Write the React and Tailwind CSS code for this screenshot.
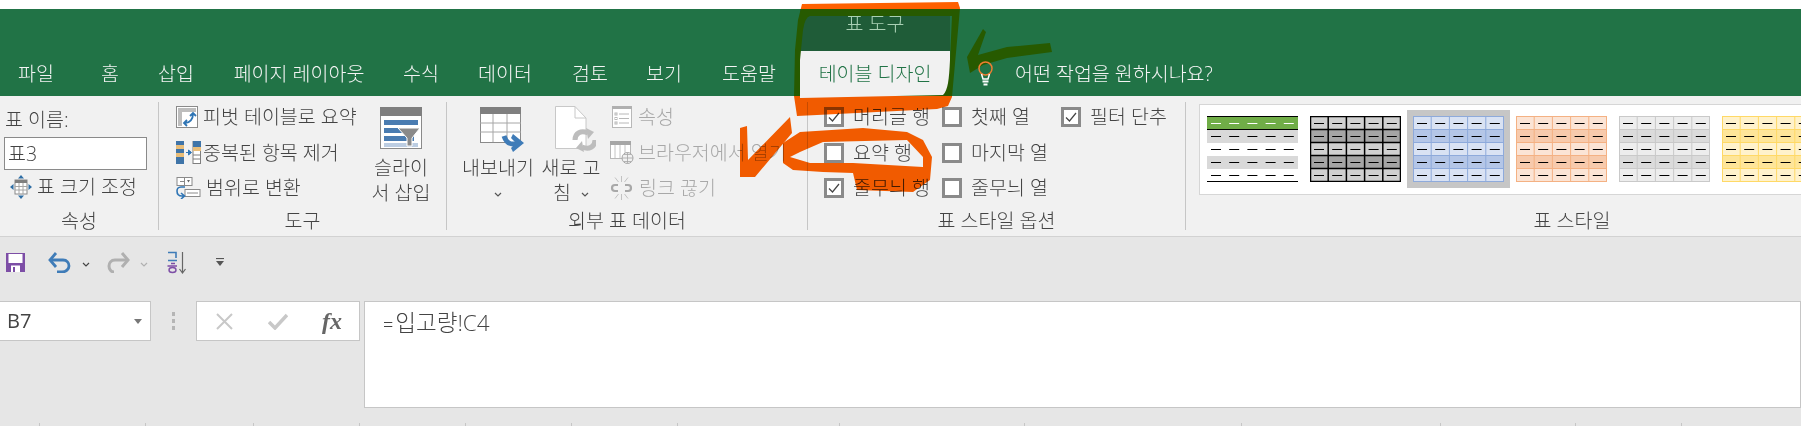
import React from "react";

const tabs = [
  ["파일", "w-[72px]"],
  ["홈", "w-[76px]"],
  ["삽입", "w-[56px]"],
  ["페이지 레이아웃", "w-[190px]"],
  ["수식", "w-[54px]"],
  ["데이터", "w-[114px]"],
  ["검토", "w-[56px]"],
  ["보기", "w-[92px]"],
  ["도움말", "w-[78px]"],
];

function Tab({ label, w }) {
  return <div className={`${w} text-center text-[#f4f4f4] whitespace-nowrap`}>{label}</div>;
}

function Check({ on }) {
  return (
    <span className="w-[20px] h-[20px] border-[3px] border-[#8a8a8a] bg-white shrink-0 flex items-center justify-center">
      {on && (
        <svg width="14" height="14" viewBox="0 0 14 14" fill="none">
          <path d="M2 7.5 L5.5 11 L12 3" stroke="#444" strokeWidth="1.2" />
        </svg>
      )}
    </span>
  );
}

function CheckRow({ on, label }) {
  return (
    <div className="h-[30px] flex items-center gap-[9px]">
      <Check on={on} />
      <span className="whitespace-nowrap">{label}</span>
    </div>
  );
}

function Group({ w, label, pad, children }) {
  return (
    <div className={`${w} shrink-0 h-[128px] mt-[6px] border-r border-[#c6c6c6] flex flex-col`}>
      <div className={`h-[110px] flex ${pad}`}>{children}</div>
      <div className="h-[18px] flex items-center justify-center text-[#444] whitespace-nowrap">{label}</div>
    </div>
  );
}

function Row({ icon, children, cls = "", iconW = "w-[27px]" }) {
  return (
    <div className={`h-[30px] flex items-center whitespace-nowrap ${cls}`}>
      <span className={`${iconW} shrink-0 flex items-center`}>{icon}</span>
      <span>{children}</span>
    </div>
  );
}

const IconResize = () => (
  <svg width="22" height="24" viewBox="0 0 22 24" fill="none">
    <path d="M11 0 L14 3.5 H8Z M11 24 L14 20.5 H8Z M0 12 L3.5 9 V15Z M22 12 L18.5 9 V15Z" fill="#2f6ea5" />
    <rect x="5" y="5" width="12" height="14" fill="#fff" stroke="#8a8a8a" />
    <rect x="5" y="5" width="12" height="3" fill="#7f7f7f" />
    <path d="M9 8V19 M13 8V19 M5 11.5H17 M5 15H17" stroke="#a6a6a6" />
  </svg>
);
const IconPivot = () => (
  <svg width="22" height="22" viewBox="0 0 22 22" fill="none">
    <rect x="0.5" y="0.5" width="21" height="21" fill="#fff" stroke="#8a8a8a" />
    <rect x="2" y="2" width="18" height="4" fill="#bdbdbd" />
    <rect x="2" y="2" width="4" height="18" fill="#bdbdbd" />
    <path d="M9 17 C14 17 17 13 17 8 M14 10 L17 7 L20 10 M11 14 L8 17 L11 20" stroke="#2f75b5" strokeWidth="1.8" />
  </svg>
);
const IconDup = () => (
  <svg width="25" height="23" viewBox="0 0 25 23" fill="none">
    <rect x="0" y="0" width="8" height="23" fill="#3f74a8" />
    <rect x="0" y="4" width="8" height="4" fill="#e9bd78" />
    <rect x="0" y="12" width="8" height="4" fill="#e9bd78" />
    <rect x="17" y="0.5" width="7.5" height="22" fill="#fff" stroke="#7f7f7f" />
    <rect x="17" y="0" width="8" height="6" fill="#3f74a8" />
    <rect x="17" y="6" width="8" height="4" fill="#e9bd78" />
    <path d="M17 14H25 M17 18H25" stroke="#7f7f7f" />
    <path d="M10 11.5H14 M12.5 9 L15.5 11.5 L12.5 14Z" stroke="#2f75b5" fill="#2f75b5" />
  </svg>
);
const IconRange = () => (
  <svg width="25" height="22" viewBox="0 0 25 22" fill="none">
    <rect x="1" y="0.5" width="15" height="8" fill="#fff" stroke="#8a8a8a" />
    <path d="M4 4.5H8 M8.5 0.5V8.5" stroke="#8a8a8a" />
    <path d="M11 3 H14 L12.5 5.5Z" fill="#666" />
    <rect x="9" y="12.5" width="15" height="7" fill="#fff" stroke="#8a8a8a" />
    <path d="M11 16H22" stroke="#8a8a8a" />
    <path d="M9 10 H5 C2 10 1 12 1 14 C1 17 3 19 6 19 H9 M5 16 L8.5 19 L5 22" stroke="#2f75b5" strokeWidth="1.6" />
  </svg>
);
const IconSlicer = () => (
  <svg width="42" height="42" viewBox="0 0 42 42" fill="none">
    <rect x="0.5" y="0.5" width="41" height="41" fill="#fff" stroke="#8a8a8a" />
    <rect x="0" y="0" width="42" height="9" fill="#7f7f7f" />
    <rect x="4" y="13" width="34" height="5" fill="#4a7cb1" />
    <rect x="4" y="21" width="22" height="5" fill="#4a7cb1" />
    <rect x="4" y="29" width="30" height="5" fill="#4a7cb1" />
    <rect x="4" y="36" width="34" height="4" fill="#bccde2" />
    <path d="M18 21 H40 L32 31 V39 H27 V31Z" fill="#8a8a8a" stroke="#fff" />
  </svg>
);
const IconExport = () => (
  <svg width="45" height="46" viewBox="0 0 45 46" fill="none">
    <rect x="0.5" y="0.5" width="40" height="35" fill="#fff" stroke="#8a8a8a" />
    <rect x="0" y="0" width="41" height="7" fill="#7f7f7f" />
    <path d="M13 7V35 M27 7V35 M0 16H41 M0 25H41" stroke="#a6a6a6" />
    <path d="M24 29 C27 38 32 38 38 36" stroke="#3f7cb8" strokeWidth="5" />
    <path d="M33 27 L44 36 L33 45 L31 41 L36 36 L31 31Z" fill="#3f7cb8" />
  </svg>
);
const IconRefresh = () => (
  <svg width="41" height="46" viewBox="0 0 41 46" fill="none">
    <path d="M0.5 0.5 H20 L31 12 V42.5 H0.5Z" fill="#fff" stroke="#c8c8c8" />
    <path d="M20 0.5 V12 H31" stroke="#c8c8c8" />
    <path d="M20 34 C20 27 26 24 33 27 M40 34 C40 41 34 44 27 41" stroke="#bdbdbd" strokeWidth="5" />
    <path d="M31 22 L39 26 L33 33Z M29 46 L21 42 L27 35Z" fill="#bdbdbd" />
  </svg>
);
const IconProps = () => (
  <svg width="20" height="22" viewBox="0 0 20 22" fill="none">
    <rect x="0.5" y="0.5" width="19" height="21" fill="#fff" stroke="#b8b8b8" />
    <rect x="0" y="0" width="20" height="3" fill="#b0b0b0" />
    <path d="M7 8H17 M7 12.5H17 M7 17H17" stroke="#b8b8b8" />
    <rect x="3" y="7" width="2" height="2" stroke="#b8b8b8" />
    <rect x="3" y="11.5" width="2" height="2" stroke="#b8b8b8" />
    <rect x="3" y="16" width="2" height="2" stroke="#b8b8b8" />
  </svg>
);
const IconBrowser = () => (
  <svg width="24" height="23" viewBox="0 0 24 23" fill="none">
    <rect x="0.5" y="0.5" width="20" height="17" fill="#fff" stroke="#b8b8b8" />
    <rect x="0" y="0" width="21" height="4" fill="#a6a6a6" />
    <path d="M5 4V17 M10 4V17 M15 4V17" stroke="#c4c4c4" />
    <circle cx="17.5" cy="17" r="5.5" fill="#f1f1f1" stroke="#a6a6a6" />
    <path d="M12 17H23 M17.5 11.5V22.5 M14 13.5H21 M14 20.5H21" stroke="#a6a6a6" strokeWidth="0.8" />
  </svg>
);
const IconBreak = () => (
  <svg width="23" height="24" viewBox="0 0 23 24" fill="none">
    <path d="M8 9 H5 C1 9 1 15 5 15 H8 M15 9 H18 C22 9 22 15 18 15 H15" stroke="#a8a8a8" strokeWidth="2.2" />
    <path d="M11.5 0V6 M11.5 18V24 M5 1.5L8.5 6 M18 1.5L14.5 6 M5 22.5L8.5 18 M18 22.5L14.5 18" stroke="#c2c2c2" />
  </svg>
);
const Chevron = ({ color = "#555" }) => (
  <svg width="8" height="6" viewBox="0 0 8 6" fill="none" className="inline-block">
    <path d="M1 1 L4 4 L7 1" stroke={color} strokeWidth="1.2" />
  </svg>
);

const swatches = [
  { kind: "plain" },
  { kind: "grid", line: "#000000", a: "#d0d0d0", b: "#a5a5a5", stroke: 1.5 },
  { kind: "grid", line: "#8eaadb", a: "#d9e2f3", b: "#b4c6e7", selected: true },
  { kind: "grid", line: "#f4b183", a: "#fbe4d5", b: "#f7caac" },
  { kind: "grid", line: "#c9c9c9", a: "#ededed", b: "#dbdbdb" },
  { kind: "grid", line: "#ffd966", a: "#fff2cc", b: "#fee599" },
  { kind: "grid", line: "#a8d08d", a: "#e2efd9", b: "#c5e0b3" },
];

function Swatch({ s }) {
  const rows = [0, 1, 2, 3, 4];
  const rh = 13;
  const cw = 18.2;
  return (
    <div className={`w-[103px] h-[78px] shrink-0 pl-[6px] pt-[6px] ${s.selected ? "bg-[#c6c6c6]" : ""}`}>
      <svg width="91" height="66" viewBox="0 0 91 66" className="block">
        {s.kind === "plain" ? (
          <>
            <rect x="0" y="0" width="91" height="14" fill="#70ad47" />
            <rect x="0" y="14" width="91" height="13" fill="#d9d9d9" />
            <rect x="0" y="40" width="91" height="13" fill="#d9d9d9" />
            <path d="M0 0.5H91 M0 13.5H91 M0 65.5H91" stroke="#000" strokeWidth="1" />
          </>
        ) : (
          <>
            {rows.map((r) => (
              <rect key={r} x="0" y={r * rh} width="91" height="14" fill={r % 2 ? s.b : s.a} />
            ))}
            {[1, 2, 3, 4].map((i) => (
              <path key={i} d={`M${i * cw} 0V66`} stroke={s.line} strokeWidth={s.stroke || 1} />
            ))}
            {[1, 2, 3, 4].map((i) => (
              <path key={i} d={`M0 ${i * rh + 0.5}H91`} stroke={s.line} strokeWidth={s.stroke || 1} />
            ))}
            <rect x="0.5" y="0.5" width="90" height="65" fill="none" stroke={s.line} strokeWidth={s.stroke || 1} />
          </>
        )}
        {rows.map((r) =>
          [0, 1, 2, 3, 4].map((c) => (
            <path
              key={`${r}-${c}`}
              d={`M${4 + c * cw} ${7.5 + r * rh}h10`}
              stroke={s.kind === "plain" && r === 0 ? "#ffffff" : "#000000"}
              strokeWidth="1"
            />
          ))
        )}
      </svg>
    </div>
  );
}

const tickGaps = ["w-[106px]", "w-[108px]", "w-[106px]", "w-[106px]", "w-[106px]", "w-[106px]", "w-[162px]", "w-[185px]", "w-[217px]", "w-[199px]", "w-[135px]", "w-[106px]", "w-[120px]"];

export default function App() {
  return (
    <div className="relative w-[1801px] h-[426px] overflow-hidden bg-white text-[19.5px] leading-none text-[#444] font-['Open_Sans','Noto_Sans_CJK_KR',sans-serif] font-light">
      <div className="h-[9px] bg-white" />
      <div className="h-[87px] bg-[#217346] flex flex-col">
        <div className="h-[42px] flex pl-[800px]">
          <div className="w-[150px] h-[42px] bg-[#1f5c38] flex items-center justify-center text-[#a9d0b4] pb-[12px]">
            표 도구
          </div>
        </div>
        <div className="h-[45px] flex items-center">
          {tabs.map(([t, w]) => (
            <Tab key={t} label={t} w={w} />
          ))}
          <div className="w-[150px] h-[45px] ml-[12px] bg-[#f1f1f1] flex items-center justify-center text-[#217346]">테이블 디자인</div>
          <svg width="17" height="25" viewBox="0 0 17 25" fill="none" className="ml-[27px] relative z-10">
            <circle cx="8.5" cy="7.5" r="6.5" stroke="#ed7d31" strokeWidth="1.5" />
            <path d="M4.5 13 L6 18 H11 L12.5 13" stroke="#fff" strokeWidth="1.5" />
            <path d="M5.5 20.5H11.5 M6.5 23.5H10.5" stroke="#fff" strokeWidth="2" />
          </svg>
          <div className="ml-[21px] text-[#f4f4f4] whitespace-nowrap">어떤 작업을 원하시나요?</div>
        </div>
      </div>

      <div className="h-[141px] bg-[#f1f1f1] border-b border-[#d2d2d2] flex overflow-hidden">
        <Group w="w-[159px]" label="속성" pad="pl-[4px] flex-col">
          <div className="h-[35px] flex items-center pl-[1px] whitespace-nowrap">표 이름:</div>
          <div className="w-[143px] h-[33px] shrink-0 bg-white border border-[#8a8a8a] flex items-center pl-[3px]">표3</div>
          <div className="h-[34px] flex items-center pl-[6px] whitespace-nowrap">
            <span className="w-[27px] shrink-0 flex items-center"><IconResize /></span>표 크기 조정
          </div>
        </Group>

        <Group w="w-[288px]" label="도구" pad="pl-[17px]">
          <div className="w-[196px] shrink-0 flex flex-col gap-[5.5px]">
            <Row icon={<IconPivot />}>피벗 테이블로 요약</Row>
            <Row icon={<IconDup />}>중복된 항목 제거</Row>
            <Row icon={<IconRange />} iconW="w-[30px]">범위로 변환</Row>
          </div>
          <div className="w-[58px] shrink-0 flex flex-col items-center pt-[5px]">
            <IconSlicer />
            <div className="mt-[6px] leading-[25px] text-center whitespace-nowrap">슬라이<br />서 삽입</div>
          </div>
        </Group>

        <Group w="w-[361px]" label="외부 표 데이터" pad="pl-[11px]">
          <div className="w-[80px] shrink-0 flex flex-col items-center pt-[5px]">
            <div className="h-[42px] pl-[8px]"><IconExport /></div>
            <div className="mt-[6px] leading-[25px] text-center whitespace-nowrap">
              내보내기<br /><Chevron />
            </div>
          </div>
          <div className="w-[66px] shrink-0 flex flex-col items-center pt-[4px]">
            <div className="h-[43px] pl-[9px]"><IconRefresh /></div>
            <div className="mt-[6px] leading-[25px] text-center whitespace-nowrap">
              새로 고<br />침 <span className="ml-[5px]"><Chevron /></span>
            </div>
          </div>
          <div className="ml-[6px] flex flex-col gap-[5.5px] text-[#a8a8a8]">
            <Row icon={<IconProps />} iconW="w-[26px]" cls="pl-[2px]">속성</Row>
            <Row icon={<IconBrowser />} iconW="w-[28px]">브라우저에서 열기</Row>
            <Row icon={<IconBreak />} iconW="w-[29px]">링크 끊기</Row>
          </div>
        </Group>

        <Group w="w-[378px]" label="표 스타일 옵션" pad="pl-[16px]">
          <div className="w-[118px] shrink-0 flex flex-col gap-[5.5px]">
            <CheckRow on label="머리글 행" />
            <CheckRow label="요약 행" />
            <CheckRow on label="줄무늬 행" />
          </div>
          <div className="w-[119px] shrink-0 flex flex-col gap-[5.5px]">
            <CheckRow label="첫째 열" />
            <CheckRow label="마지막 열" />
            <CheckRow label="줄무늬 열" />
          </div>
          <div className="flex flex-col">
            <CheckRow on label="필터 단추" />
          </div>
        </Group>

        <div className="w-[772px] shrink-0 h-[128px] mt-[6px] flex flex-col">
          <div className="h-[110px] pl-[13px] pt-[2px]">
            <div className="w-[760px] h-[91px] bg-white border border-[#d6d6d6] pl-[1px] pt-[5px] flex">
              {swatches.map((s, i) => (
                <Swatch key={i} s={s} />
              ))}
            </div>
          </div>
          <div className="h-[18px] flex items-center justify-center whitespace-nowrap">표 스타일</div>
        </div>
      </div>

      <div className="h-[189px] bg-[#e6e6e6] flex flex-col">
        <div className="h-[50px] flex items-center pl-[6px] pt-[1px] shrink-0">
          <svg width="19" height="19" viewBox="0 0 19 19" className="shrink-0">
            <path d="M0 0H19V19H0Z" fill="#7d4ea6" />
            <rect x="2.5" y="1" width="14" height="9" fill="#ffffff" />
            <rect x="5" y="12.5" width="9" height="6.5" fill="#ffffff" />
            <rect x="7" y="14" width="2" height="5" fill="#7d4ea6" />
          </svg>
          <svg width="23" height="21" viewBox="0 0 23 21" fill="none" className="ml-[23px] shrink-0">
            <path d="M3 8 H15 C19 8 21 11 21 14 C21 17 18 20 14 20 H9" stroke="#3f7cb8" strokeWidth="2.8" />
            <path d="M8 1 L2 8 L8 15" stroke="#3f7cb8" strokeWidth="2.8" />
          </svg>
          <span className="ml-[11px]"><Chevron color="#444" /></span>
          <svg width="23" height="21" viewBox="0 0 23 21" fill="none" className="ml-[17px] shrink-0">
            <path d="M20 8 H8 C4 8 2 11 2 14 C2 17 4 20 7 20" stroke="#b0b0b0" strokeWidth="3" />
            <path d="M15 1 L21 8 L15 15" stroke="#b0b0b0" strokeWidth="3" />
          </svg>
          <span className="ml-[10px]"><Chevron color="#b0b0b0" /></span>
          <span className="ml-[19px] shrink-0">
            <svg width="20" height="23" viewBox="0 0 20 23" fill="none">
              <path d="M1 1.5H9 V7 M1 9.5H10" stroke="#3f7cb8" strokeWidth="1.6" />
              <path d="M4 12.5H8 M0.5 15H10" stroke="#7d4ea6" strokeWidth="1.4" />
              <ellipse cx="5.5" cy="19" rx="3.5" ry="2.5" stroke="#7d4ea6" strokeWidth="1.4" />
              <path d="M15.5 1V21 M12.5 18 L15.5 22 L18.5 18" stroke="#666" strokeWidth="1.2" />
            </svg>
          </span>
          <svg width="10" height="9" viewBox="0 0 10 9" className="ml-[28px] shrink-0">
            <path d="M1 0.5H9" stroke="#555" strokeWidth="1.2" />
            <path d="M1 3 H9 L5 8Z" fill="#555" />
          </svg>
        </div>
        <div className="h-[14px] shrink-0" />
        <div className="h-[107px] flex items-start shrink-0">
          <div className="w-[151px] h-[40px] bg-white border border-[#c6c6c6] border-l-0 flex items-center justify-between pl-[7px] pr-[8px] text-[20px]">
            <span className="font-normal">B7</span>
            <svg width="8" height="5" viewBox="0 0 8 5"><path d="M0 0H8L4 5Z" fill="#777" /></svg>
          </div>
          <div className="w-[45px] h-[40px] flex items-center justify-center shrink-0">
            <svg width="4" height="18" viewBox="0 0 4 18">
              <rect x="0" y="0" width="3" height="4" fill="#b5b5b5" />
              <rect x="0" y="7" width="3" height="4" fill="#b5b5b5" />
              <rect x="0" y="14" width="3" height="4" fill="#b5b5b5" />
            </svg>
          </div>
          <div className="w-[164px] h-[40px] bg-white border border-[#c6c6c6] flex items-center shrink-0">
            <svg width="17" height="17" viewBox="0 0 17 17" fill="none" className="ml-[19px]">
              <path d="M1 1 L16 16 M16 1 L1 16" stroke="#c8c8c8" strokeWidth="2" />
            </svg>
            <svg width="20" height="17" viewBox="0 0 20 17" fill="none" className="ml-[35px]">
              <path d="M1 9 L7 15 L19 2" stroke="#c8c8c8" strokeWidth="3.5" />
            </svg>
            <span className="ml-[34px] font-['Liberation_Serif',serif] italic font-bold text-[24px] text-[#666]">fx</span>
          </div>
          <div className="w-[4px] shrink-0" />
          <div className="flex-1 h-[107px] bg-white border border-[#c6c6c6] pl-[18px] pt-[6px] text-[22.5px] leading-[30px] whitespace-nowrap">
            <span className="text-[18px] mr-[2px]">=</span>입고량!C4
          </div>
        </div>
        <div className="mt-[15px] h-[3px] flex pl-[39px] shrink-0">
          {tickGaps.map((w, i) => (
            <div key={i} className={`${w} shrink-0 border-l border-[#c6c6c6]`} />
          ))}
        </div>
      </div>

      <svg width="1801" height="426" viewBox="0 0 1801 426" className="absolute inset-0 pointer-events-none" fill="none">
        <defs>
          <clipPath id="band"><rect x="0" y="9" width="1801" height="87" /></clipPath>
          <clipPath id="outside">
            <path d="M0 0H1801V9H0Z M0 96H1801V426H0Z" />
          </clipPath>
        </defs>
        <g className="mix-blend-multiply" clipPath="url(#outside)">
          <path fillRule="evenodd" d="M797 116 L794 96 L795 50 L798 20 L802 4 L958 2 L960 8 L952 97 L948 106 L937 109 Z M800 98 L943 95 C948 90 949 80 950 60 L952 16 L810 16 Q805 17 803 30 L800 60 Z" fill="#ff6000" />
          <path fillRule="evenodd" d="M783 143 L783 163 L793 170 L823 172 L853 173 L857 190 L913 192 L930 180 L932 157 L923 140 L907 132 L863 128 L800 132 Z M790 157 L800 152 L823 142 L907 140 L923 157 L923 167 L853 163 L810 163 Z" fill="#ff6000" />
          <path d="M740 128 L747 126 L748 160 L790 117 L792 133 L755 177 L740 177Z" fill="#ff6000" />
        </g>
        <g clipPath="url(#band)">
          <path fillRule="evenodd" d="M797 116 L794 96 L795 50 L798 20 L802 4 L958 2 L960 8 L952 97 L948 106 L937 109 Z M800 98 L943 95 C948 90 949 80 950 60 L952 16 L810 16 Q805 17 803 30 L800 60 Z" fill="#275a00" />
          <path d="M983 29 L986 32 L978 55 L1007 47 L1050 43 L1052 52 L1007 58 L983 65 L970 73 L967 57Z" fill="#275a00" />
        </g>
      </svg>
    </div>
  );
}
